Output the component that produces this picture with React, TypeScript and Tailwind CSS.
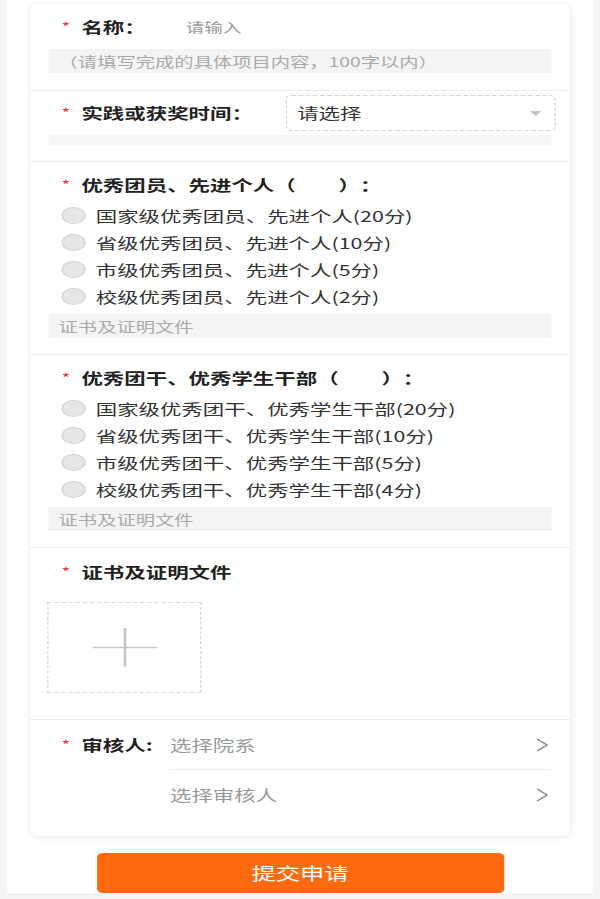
import React from "react";

type Group = {
  title: string;
  options: string[];
};

const groups: Group[] = [
  {
    title: "优秀团员、先进个人（　　）：",
    options: [
      "国家级优秀团员、先进个人(20分)",
      "省级优秀团员、先进个人(10分)",
      "市级优秀团员、先进个人(5分)",
      "校级优秀团员、先进个人(2分)",
    ],
  },
  {
    title: "优秀团干、优秀学生干部（　　）：",
    options: [
      "国家级优秀团干、优秀学生干部(20分)",
      "省级优秀团干、优秀学生干部(10分)",
      "市级优秀团干、优秀学生干部(5分)",
      "校级优秀团干、优秀学生干部(4分)",
    ],
  },
];

function Star() {
  return (
    <span className="w-[14px] text-[13px] leading-[20px] text-[#e4393c]">*</span>
  );
}

function Chevron() {
  return (
    <svg width="9" height="14" viewBox="0 0 9 14" className="mr-[2px]">
      <polyline
        points="1,1 8,7 1,13"
        fill="none"
        stroke="#8a8a8a"
        strokeWidth="1.2"
      />
    </svg>
  );
}

export default function App() {
  return (
    <div className="min-h-[899px] w-[600px] overflow-hidden bg-[#f5f5f5] font-['Noto_Sans_CJK_SC','Noto_Sans',sans-serif] [text-spacing-trim:space-all]">
      {/* the screenshot is stretched horizontally, so the page is laid out at 420px and widened */}
      <div className="w-[420px] origin-top-left scale-x-[1.4286]">
        <div className="mx-[5px] h-[893px] bg-white pt-[4px]">
          <div className="mx-4 rounded-[6px] bg-white shadow-[0_1px_6px_rgba(0,0,0,0.09)]">
            {/* 名称 */}
            <div className="border-b border-[#eeeeee] pt-[13px] pb-[17px]">
              <div className="flex h-[20px] items-center pl-[22px]">
                <Star />
                <span className="w-[73px] text-[15px] font-bold leading-[20px] text-[#222]">
                  名称：
                </span>
                <span className="text-[13px] leading-[20px] text-[#999]">请输入</span>
              </div>
              <div className="mx-[13px] mt-3 h-[24px] bg-[#f4f4f4] pl-[7px] text-[13.5px] leading-[24px] text-[#aaa]">
                （请填写完成的具体项目内容，100字以内）
              </div>
            </div>

            {/* 时间 */}
            <div className="border-b border-[#eeeeee] pt-[4px] pb-[16px]">
              <div className="flex items-center pl-[22px] pr-[10px]">
                <Star />
                <span className="text-[15px] font-bold leading-[20px] text-[#222]">
                  实践或获奖时间：
                </span>
                <div className="ml-auto flex h-[36px] w-[189px] items-center justify-between rounded-[4px] border border-dashed border-[#d5d5d5] pl-[7px] pr-[9px]">
                  <span className="text-[15px] leading-[20px] text-[#333]">请选择</span>
                  <svg width="8" height="5" viewBox="0 0 8 5">
                    <polygon points="0,0 8,0 4,5" fill="#c4c4c4" />
                  </svg>
                </div>
              </div>
              <div className="mx-[13px] mt-[4px] h-[10px] bg-[#f6f6f6]" />
            </div>

            {groups.map((group) => (
              <div
                key={group.title}
                className="border-b border-[#eeeeee] pt-[13px] pb-[16px]"
              >
                <div className="flex h-[20px] items-center pl-[22px]">
                  <Star />
                  <span className="text-[15px] font-bold leading-[20px] text-[#222]">
                    {group.title}
                  </span>
                </div>
                <div className="mt-[7px] pl-[22px]">
                  {group.options.map((opt) => (
                    <div key={opt} className="flex h-[27px] items-center gap-[7px]">
                      <span className="h-[17px] w-[17px] shrink-0 rounded-full border border-[#d6d6d6] bg-[#e6e6e6]" />
                      <span className="text-[15px] leading-[20px] text-[#333]">{opt}</span>
                    </div>
                  ))}
                </div>
                <div className="mx-[13px] mt-[4px] h-[24px] bg-[#f4f4f4] pl-[7px] text-[13.5px] leading-[24px] text-[#aaa]">
                  证书及证明文件
                </div>
              </div>
            ))}

            {/* 上传 */}
            <div className="border-b border-[#eeeeee] pt-[14px] pb-[26px]">
              <div className="flex h-[20px] items-center pl-[22px]">
                <Star />
                <span className="text-[15px] font-bold leading-[20px] text-[#222]">
                  证书及证明文件
                </span>
              </div>
              <div className="ml-[12px] mt-[20px] flex h-[91px] w-[108px] items-center justify-center border border-dashed border-[#dadada]">
                <svg width="45" height="39" viewBox="0 0 45 39">
                  <line x1="0" y1="19.5" x2="45" y2="19.5" stroke="#c6c6c6" strokeWidth="1.6" />
                  <line x1="22.5" y1="0" x2="22.5" y2="39" stroke="#c6c6c6" strokeWidth="1.8" />
                </svg>
              </div>
            </div>

            {/* 审核人 */}
            <div className="flex pb-[16px]">
              <div className="flex h-[50px] w-[98px] shrink-0 items-center pl-[22px]">
                <Star />
                <span className="text-[15px] font-bold leading-[20px] text-[#222]">审核人:</span>
              </div>
              <div className="flex-1 pr-[13px]">
                <div className="flex h-[50px] items-center justify-between border-b border-[#eeeeee]">
                  <span className="text-[15px] leading-[20px] text-[#999]">选择院系</span>
                  <Chevron />
                </div>
                <div className="flex h-[50px] items-center justify-between">
                  <span className="text-[15px] leading-[20px] text-[#999]">选择审核人</span>
                  <Chevron />
                </div>
              </div>
            </div>
          </div>

          <div className="mx-auto mt-[17px] flex h-[40px] w-[285px] items-center justify-center rounded-[4px] bg-[#ff6a10]">
            <span className="text-[17px] leading-[20px] text-white">提交申请</span>
          </div>
        </div>
      </div>
    </div>
  );
}
